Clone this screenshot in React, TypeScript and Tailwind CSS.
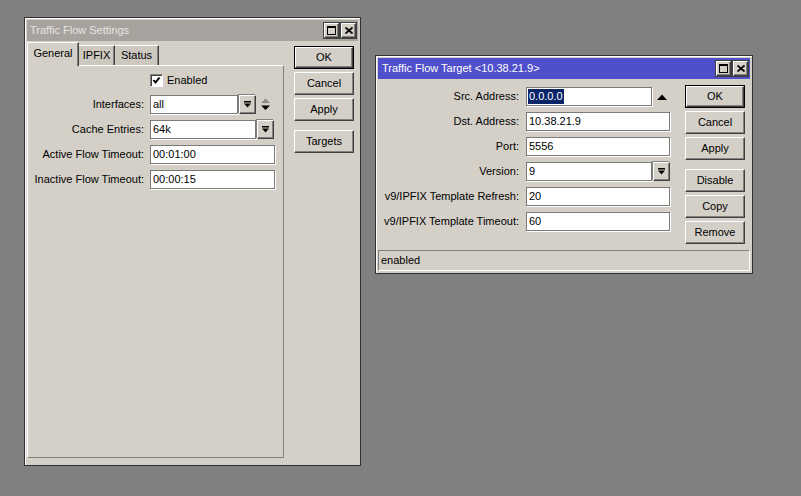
import React from 'react';

function DropIcon() {
  return (
    <svg width="7" height="7" viewBox="0 0 7 7">
      <rect x="0" y="0" width="7" height="1.5" fill="#000" />
      <polygon points="0,2.5 7,2.5 3.5,6.5" fill="#000" />
    </svg>
  );
}

function TitleButtons() {
  return (
    <div className="flex gap-[2px]">
      <div className="w-[15px] h-[15px] bg-[#d4d0c8] border border-t-white border-l-white border-r-[#404040] border-b-[#404040] shadow-[inset_-1px_-1px_0_#808080,0_0_0_1px_#404040] flex items-center justify-center">
        <svg width="9" height="9" viewBox="0 0 9 9">
          <rect x="0.5" y="0.5" width="8" height="8" fill="none" stroke="#000" />
          <rect x="0" y="0" width="9" height="2" fill="#000" />
        </svg>
      </div>
      <div className="w-[15px] h-[15px] bg-[#d4d0c8] border border-t-white border-l-white border-r-[#404040] border-b-[#404040] shadow-[inset_-1px_-1px_0_#808080,0_0_0_1px_#404040] flex items-center justify-center">
        <svg width="8" height="7" viewBox="0 0 8 7">
          <path d="M0.5 0.5 L7.5 6.5 M7.5 0.5 L0.5 6.5" stroke="#000" strokeWidth="1.8" />
        </svg>
      </div>
    </div>
  );
}

function Btn({ label, def }: { label: string; def?: boolean }) {
  if (def) {
    return (
      <div className="h-[23px] w-[60px] border border-black">
        <div className="h-full w-full border border-t-white border-l-white border-r-[#404040] border-b-[#404040] shadow-[inset_-1px_-1px_0_#808080] flex items-center justify-center">
          {label}
        </div>
      </div>
    );
  }
  return (
    <div className="h-[23px] w-[60px] border border-t-white border-l-white border-r-[#404040] border-b-[#404040] shadow-[inset_-1px_-1px_0_#808080] flex items-center justify-center">
      {label}
    </div>
  );
}

function Field({ value, w, selected }: { value: string; w: string; selected?: boolean }) {
  return (
    <div className={`h-[19px] ${w} bg-white border border-[#7a7a7a] shadow-[1px_1px_0_#fff] flex items-center pl-[1px]`}>
      {selected ? <span className="bg-[#0a246a] text-white px-[1px] leading-[15px]">{value}</span> : <span className="pl-[1px]">{value}</span>}
    </div>
  );
}

function DropBtn() {
  return (
    <div className="h-[19px] w-[17px] border border-t-white border-l-white border-r-[#404040] border-b-[#404040] shadow-[inset_-1px_-1px_0_#808080,-1px_-1px_0_#808080] flex items-center justify-center">
      <DropIcon />
    </div>
  );
}

function Label({ text }: { text: string }) {
  return <div className="h-[19px] flex items-center justify-end">{text}</div>;
}

export default function App() {
  return (
    <div className="relative w-[801px] h-[496px] bg-[#808080] overflow-hidden text-[11px] text-black font-['Liberation_Sans',Arial,sans-serif]">
      {/* Traffic Flow Settings */}
      <div className="absolute left-[24px] top-[17px] w-[337px] h-[449px] border border-[#303030] bg-[#d4d0c8] p-[2px] flex flex-col shadow-[inset_1px_1px_0_#fff]">
        <div className="h-[21px] bg-[#a6a39e] flex items-center justify-between pl-[3px] pr-[2px]">
          <span className="text-[#e6e4e0]">Traffic Flow Settings</span>
          <TitleButtons />
        </div>
        <div className="flex flex-1 mt-[1px] gap-[10px]">
          <div className="w-[257px] flex flex-col mb-[5px]">
            <div className="flex items-end h-[23px]">
              <div className="relative z-10 h-[24px] -mb-px w-[52px] bg-[#d4d0c8] border-t border-l border-t-white border-l-white border-r border-r-[#404040] shadow-[inset_-1px_0_0_#808080] flex items-center justify-center pb-[3px]">
                General
              </div>
              <div className="h-[20px] w-[36px] border-t border-t-white border-r border-r-[#404040] shadow-[inset_-1px_0_0_#808080] bg-[#ccc8c0] flex items-center justify-center">
                IPFIX
              </div>
              <div className="h-[20px] w-[44px] border-t border-t-white border-r border-r-[#404040] shadow-[inset_-1px_0_0_#808080] bg-[#ccc8c0] flex items-center justify-center">
                Status
              </div>
            </div>
            <div className="flex-1 border border-t-white border-l-white border-r-[#808080] border-b-[#808080] pt-[8px]">
              <div className="grid grid-cols-[116px_auto] gap-x-[6px] gap-y-[6px] items-center">
                <div />
                <div className="flex items-center gap-[4px] h-[13px] mb-[2px]">
                  <div className="w-[13px] h-[13px] bg-white border border-t-[#808080] border-l-[#808080] border-r-white border-b-white shadow-[inset_1px_1px_0_#404040] flex items-center justify-center">
                    <svg width="9" height="9" viewBox="0 0 9 9">
                      <polyline points="1.5,4 3.5,6.5 7.5,1.5" fill="none" stroke="#000" strokeWidth="2" />
                    </svg>
                  </div>
                  <span>Enabled</span>
                </div>
                <Label text="Interfaces:" />
                <div className="flex items-center">
                  <Field value="all" w="w-[88px]" />
                  <div className="ml-[1px]"><DropBtn /></div>
                  <svg className="ml-[4px]" width="11" height="13" viewBox="0 0 11 13">
                    <polygon points="1,5 10,5 5.5,0.5" fill="#8a8a8a" />
                    <polygon points="1,7.5 10,7.5 5.5,12" fill="#000" />
                  </svg>
                </div>
                <Label text="Cache Entries:" />
                <div className="flex items-center">
                  <Field value="64k" w="w-[106px]" />
                  <div className="ml-[1px]"><DropBtn /></div>
                </div>
                <Label text="Active Flow Timeout:" />
                <Field value="00:01:00" w="w-[125px]" />
                <Label text="Inactive Flow Timeout:" />
                <Field value="00:00:15" w="w-[125px]" />
              </div>
            </div>
          </div>
          <div className="w-[60px] flex flex-col pt-[4px] gap-[3px]">
            <Btn label="OK" def />
            <Btn label="Cancel" />
            <Btn label="Apply" />
            <div className="mt-[6px]"><Btn label="Targets" /></div>
          </div>
        </div>
      </div>

      {/* Traffic Flow Target */}
      <div className="absolute left-[375px] top-[55px] w-[378px] h-[219px] border border-[#303030] bg-[#d4d0c8] p-[2px] flex flex-col shadow-[inset_1px_1px_0_#fff]">
        <div className="h-[21px] bg-[#4f4fcc] flex items-center justify-between pl-[4px] pr-[2px]">
          <span className="text-white">Traffic Flow Target &lt;10.38.21.9&gt;</span>
          <TitleButtons />
        </div>
        <div className="flex flex-1">
          <div className="flex-1 pt-[8px]">
            <div className="grid grid-cols-[141px_auto] gap-x-[7px] gap-y-[6px] items-center">
              <Label text="Src. Address:" />
              <div className="flex items-center">
                <Field value="0.0.0.0" w="w-[126px]" selected />
                <svg className="ml-[5px]" width="10" height="6" viewBox="0 0 10 6">
                  <polygon points="0,6 10,6 5,0.5" fill="#000" />
                </svg>
              </div>
              <Label text="Dst. Address:" />
              <Field value="10.38.21.9" w="w-[144px]" />
              <Label text="Port:" />
              <Field value="5556" w="w-[144px]" />
              <Label text="Version:" />
              <div className="flex items-center">
                <Field value="9" w="w-[126px]" />
                <div className="ml-[1px]"><DropBtn /></div>
              </div>
              <Label text="v9/IPFIX Template Refresh:" />
              <Field value="20" w="w-[144px]" />
              <Label text="v9/IPFIX Template Timeout:" />
              <Field value="60" w="w-[144px]" />
            </div>
          </div>
          <div className="w-[60px] mr-[5px] flex flex-col pt-[6px] gap-[3px]">
            <Btn label="OK" def />
            <Btn label="Cancel" />
            <Btn label="Apply" />
            <div className="mt-[6px]"><Btn label="Disable" /></div>
            <Btn label="Copy" />
            <Btn label="Remove" />
          </div>
        </div>
        <div className="h-[21px] border border-t-[#808080] border-l-[#808080] border-r-white border-b-white flex items-center pl-[2px]">
          enabled
        </div>
      </div>
    </div>
  );
}
